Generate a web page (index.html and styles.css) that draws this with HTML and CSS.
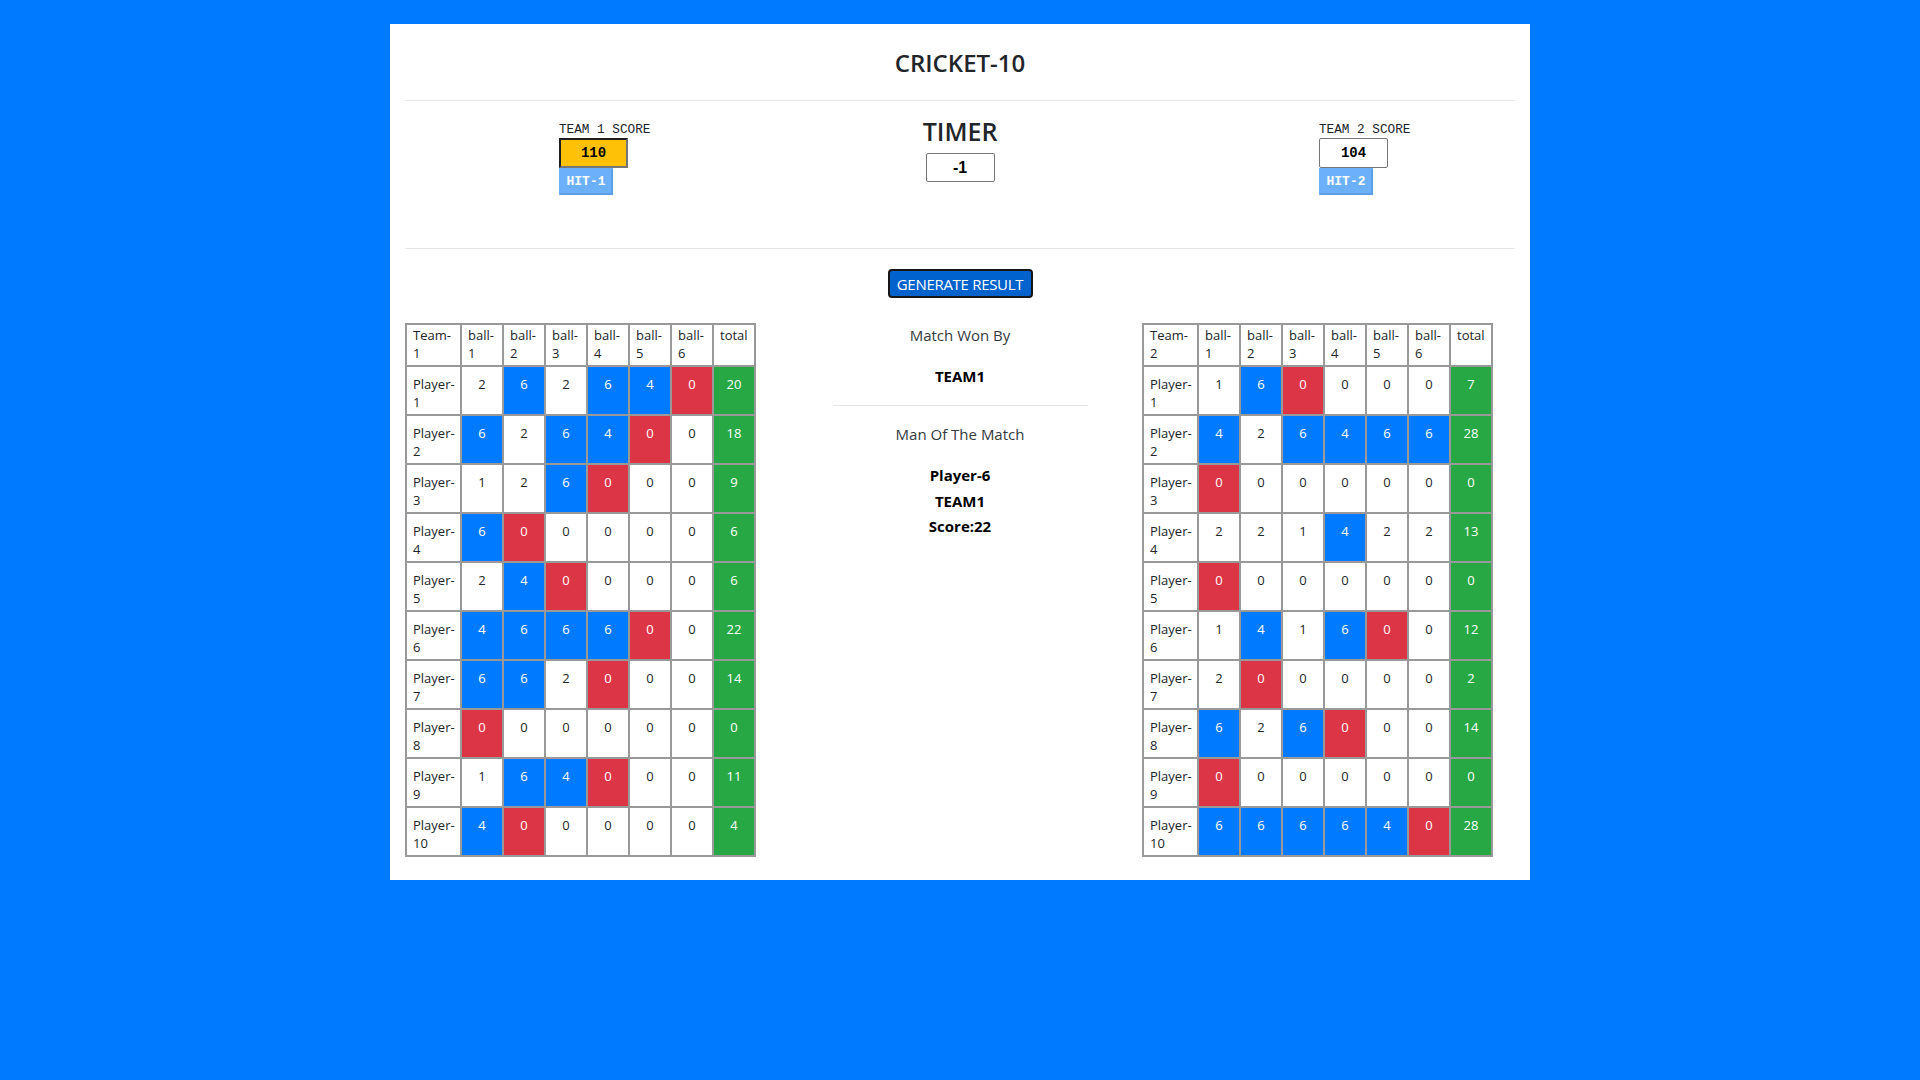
FILE: index.html
```html
<!DOCTYPE html>
<html lang="en">
<head>
<meta charset="utf-8">
<title>Cricket-10</title>
<link rel="stylesheet" href="styles.css">
</head>
<body>
<div class="page">
  <h4 class="title">CRICKET-10</h4>
  <div class="rule"></div>
  <div class="scores">
    <div class="team">
      <label class="score-label">TEAM 1 SCORE</label>
      <div class="score-box lead">110</div>
      <button class="hit" disabled>HIT-1</button>
    </div>
    <div class="timer">
      <h3 class="timer-title">TIMER</h3>
      <div class="timer-box">-1</div>
    </div>
    <div class="team">
      <label class="score-label">TEAM 2 SCORE</label>
      <div class="score-box">104</div>
      <button class="hit" disabled>HIT-2</button>
    </div>
  </div>
  <div class="rule"></div>
  <div class="actions"><button class="generate">GENERATE RESULT</button></div>
  <div class="results">
    <div class="col-left">
      <table class="board">
        <thead><tr><th class="c-name">Team-<br>1</th><th>ball-<br>1</th><th>ball-<br>2</th><th>ball-<br>3</th><th>ball-<br>4</th><th>ball-<br>5</th><th>ball-<br>6</th><th>total</th></tr></thead>
        <tbody>
          <tr><td class="c-name">Player-<br>1</td><td>2</td><td class="b">6</td><td>2</td><td class="b">6</td><td class="b">4</td><td class="o">0</td><td class="t">20</td></tr>
          <tr><td class="c-name">Player-<br>2</td><td class="b">6</td><td>2</td><td class="b">6</td><td class="b">4</td><td class="o">0</td><td>0</td><td class="t">18</td></tr>
          <tr><td class="c-name">Player-<br>3</td><td>1</td><td>2</td><td class="b">6</td><td class="o">0</td><td>0</td><td>0</td><td class="t">9</td></tr>
          <tr><td class="c-name">Player-<br>4</td><td class="b">6</td><td class="o">0</td><td>0</td><td>0</td><td>0</td><td>0</td><td class="t">6</td></tr>
          <tr><td class="c-name">Player-<br>5</td><td>2</td><td class="b">4</td><td class="o">0</td><td>0</td><td>0</td><td>0</td><td class="t">6</td></tr>
          <tr><td class="c-name">Player-<br>6</td><td class="b">4</td><td class="b">6</td><td class="b">6</td><td class="b">6</td><td class="o">0</td><td>0</td><td class="t">22</td></tr>
          <tr><td class="c-name">Player-<br>7</td><td class="b">6</td><td class="b">6</td><td>2</td><td class="o">0</td><td>0</td><td>0</td><td class="t">14</td></tr>
          <tr><td class="c-name">Player-<br>8</td><td class="o">0</td><td>0</td><td>0</td><td>0</td><td>0</td><td>0</td><td class="t">0</td></tr>
          <tr><td class="c-name">Player-<br>9</td><td>1</td><td class="b">6</td><td class="b">4</td><td class="o">0</td><td>0</td><td>0</td><td class="t">11</td></tr>
          <tr><td class="c-name">Player-<br>10</td><td class="b">4</td><td class="o">0</td><td>0</td><td>0</td><td>0</td><td>0</td><td class="t">4</td></tr>
        </tbody>
      </table>
    </div>
    <div class="summary">
      <div class="sum-label">Match Won By</div>
      <div class="sum-win">TEAM1</div>
      <div class="sum-rule"></div>
      <div class="sum-label second">Man Of The Match</div>
      <div class="sum-mom">
        <div>Player-6</div>
        <div>TEAM1</div>
        <div>Score:22</div>
      </div>
    </div>
    <div class="col-right">
      <table class="board">
        <thead><tr><th class="c-name">Team-<br>2</th><th>ball-<br>1</th><th>ball-<br>2</th><th>ball-<br>3</th><th>ball-<br>4</th><th>ball-<br>5</th><th>ball-<br>6</th><th>total</th></tr></thead>
        <tbody>
          <tr><td class="c-name">Player-<br>1</td><td>1</td><td class="b">6</td><td class="o">0</td><td>0</td><td>0</td><td>0</td><td class="t">7</td></tr>
          <tr><td class="c-name">Player-<br>2</td><td class="b">4</td><td>2</td><td class="b">6</td><td class="b">4</td><td class="b">6</td><td class="b">6</td><td class="t">28</td></tr>
          <tr><td class="c-name">Player-<br>3</td><td class="o">0</td><td>0</td><td>0</td><td>0</td><td>0</td><td>0</td><td class="t">0</td></tr>
          <tr><td class="c-name">Player-<br>4</td><td>2</td><td>2</td><td>1</td><td class="b">4</td><td>2</td><td>2</td><td class="t">13</td></tr>
          <tr><td class="c-name">Player-<br>5</td><td class="o">0</td><td>0</td><td>0</td><td>0</td><td>0</td><td>0</td><td class="t">0</td></tr>
          <tr><td class="c-name">Player-<br>6</td><td>1</td><td class="b">4</td><td>1</td><td class="b">6</td><td class="o">0</td><td>0</td><td class="t">12</td></tr>
          <tr><td class="c-name">Player-<br>7</td><td>2</td><td class="o">0</td><td>0</td><td>0</td><td>0</td><td>0</td><td class="t">2</td></tr>
          <tr><td class="c-name">Player-<br>8</td><td class="b">6</td><td>2</td><td class="b">6</td><td class="o">0</td><td>0</td><td>0</td><td class="t">14</td></tr>
          <tr><td class="c-name">Player-<br>9</td><td class="o">0</td><td>0</td><td>0</td><td>0</td><td>0</td><td>0</td><td class="t">0</td></tr>
          <tr><td class="c-name">Player-<br>10</td><td class="b">6</td><td class="b">6</td><td class="b">6</td><td class="b">6</td><td class="b">4</td><td class="o">0</td><td class="t">28</td></tr>
        </tbody>
      </table>
    </div>
  </div>
</div>
</body>
</html>
```
FILE: styles.css
```css
* { box-sizing: border-box; }

html, body {
  margin: 0;
  padding: 0;
}

body {
  background: #007bff;
  font-family: "Segoe UI", "Open Sans", "Noto Sans", sans-serif;
  color: #212529;
  font-size: 16px;
  line-height: 1.5;
  min-height: 1080px;
}

.page {
  width: 1140px;
  margin: 24px auto 0;
  background: #fff;
  padding: 24px 15px 23px;
}

.title {
  margin: 0;
  text-align: center;
  font-size: 24px;
  font-weight: 600;
  line-height: 29px;
  color: #212529;
}

.rule {
  height: 1px;
  background: #e6e6e6;
}

.title + .rule { margin-top: 23px; }

.scores {
  display: grid;
  grid-template-columns: 380px 380px 380px;
  margin: 0 -15px;
  height: 147px;
}

.team {
  padding: 21px 0 0 169px;
  display: flex;
  flex-direction: column;
  align-items: flex-start;
}

.score-label {
  display: block;
  height: 16px;
  font-family: "Liberation Mono", "DejaVu Sans Mono", monospace;
  font-size: 12.7px;
  line-height: 15px;
  color: #212529;
}

.score-box {
  width: 69px;
  height: 30px;
  border: 2px solid;
  border-color: #1f1f1f #767676 #767676 #1f1f1f;
  background: #fff;
  font-family: "Liberation Mono", "DejaVu Sans Mono", monospace;
  font-weight: bold;
  font-size: 14px;
  line-height: 26px;
  text-align: center;
  color: #000;
}

.score-box:not(.lead) {
  border: 1px solid #767676;
  border-radius: 2px;
  line-height: 28px;
}

.score-box.lead { background: #ffc107; }

.hit {
  width: 54px;
  height: 27px;
  margin: 0;
  padding: 0;
  background: #6cb0fb;
  border: 2px solid;
  border-color: #6cb0fb #5b9fe6 #5b9fe6 #6cb0fb;
  color: #fff;
  font-family: "Liberation Mono", "DejaVu Sans Mono", monospace;
  font-weight: bold;
  font-size: 13px;
  line-height: 23px;
  text-align: center;
}

.timer {
  padding: 16px 15px 0;
  display: flex;
  flex-direction: column;
  align-items: center;
}

.timer-title {
  margin: 0;
  font-size: 25px;
  font-weight: 600;
  line-height: 29px;
  color: #212529;
}

.timer-box {
  margin-top: 7px;
  width: 69px;
  height: 29px;
  border: 1px solid #767676;
  border-radius: 2px;
  font-family: "Liberation Sans", Arial, sans-serif;
  font-weight: bold;
  font-size: 16px;
  line-height: 27px;
  text-align: center;
  color: #000;
}

.actions {
  display: flex;
  justify-content: center;
  padding-top: 20px;
}

.generate {
  width: 145px;
  height: 29px;
  margin: 0;
  padding: 0;
  background: #0062cc;
  border: 2px solid #161616;
  border-radius: 4px;
  color: #fff;
  font-family: "Segoe UI", "Open Sans", "Noto Sans", sans-serif;
  font-size: 15px;
  line-height: 24px;
  white-space: nowrap;
  letter-spacing: -0.3px;
}

.results {
  display: grid;
  grid-template-columns: 365px 380px 365px;
  margin-top: 25px;
}

.col-right .board { margin-left: -8px; }

.board {
  table-layout: fixed;
  width: 351px;
  border-collapse: separate;
  border-spacing: 0;
  border-top: 2px solid #999;
  border-left: 2px solid #999;
  font-size: 13px;
  line-height: 18px;
  color: #212529;
}

.board th,
.board td {
  width: 42px;
  border-right: 2px solid #999;
  border-bottom: 2px solid #999;
  vertical-align: top;
  background: #fff;
}

.board .c-name { width: 55px; text-align: left; }

.board th {
  height: 42px;
  padding: 1px 5px 0 6px;
  font-weight: normal;
  text-align: left;
}

.board td {
  height: 49px;
  padding: 8px 4px 0;
  text-align: center;
}

.board td.c-name { padding-left: 6px; }

.board td.b { background: #007bff; color: #fff; }
.board td.o { background: #dc3545; color: #fff; }
.board td.t { background: #28a745; color: #fff; }

.summary {
  text-align: center;
}

.sum-label {
  font-size: 15px;
  line-height: 24px;
  color: #343a40;
}

.sum-win {
  margin-top: 17px;
  font-weight: bold;
  font-size: 15px;
  line-height: 24px;
  color: #000;
}

.sum-rule {
  height: 1px;
  background: #e6e6e6;
  margin: 17px 62px 0 63px;
}

.sum-label.second { margin-top: 16px; }

.sum-mom {
  margin-top: 17px;
  font-weight: bold;
  font-size: 15px;
  line-height: 25.5px;
  color: #000;
}
```
